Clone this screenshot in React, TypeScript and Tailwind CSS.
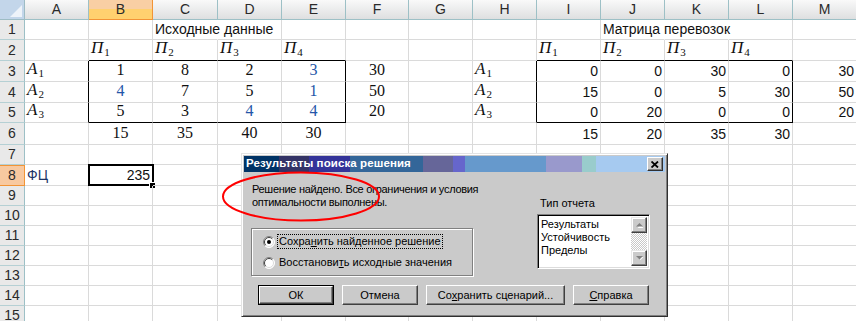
import type { ReactNode } from "react";

const COLS = ["A", "B", "C", "D", "E", "F", "G", "H", "I", "J", "K", "L", "M"];
const ROWS = [1, 2, 3, 4, 5, 6, 7, 8, 9, 10, 11, 12, 13, 14, 15];

type Cell = {
    v: ReactNode;
    font: "sans" | "serif";
    align: "left" | "center" | "right";
    color?: string;
};

// italic label with a subscript digit, as in the sheet
function Label({ ch, n }: { ch: string; n: number }) {
    return (
        <span className="italic text-[17px] leading-[18px]">
            {ch}
            <span className="not-italic text-[11px] relative top-[3px] ml-[1px]">{n}</span>
        </span>
    );
}

const cells: Record<string, Cell> = {
    C1: { v: "Исходные данные", font: "sans", align: "left" },
    J1: { v: "Матрица перевозок", font: "sans", align: "left" },
    A8: { v: "ФЦ", font: "sans", align: "left", color: "text-[#1c3366]" },
    B8: { v: "235", font: "sans", align: "right" },
};

["B", "C", "D", "E"].forEach((c, i) => {
    cells[c + "2"] = { v: <Label ch="П" n={i + 1} />, font: "serif", align: "left" };
});
["I", "J", "K", "L"].forEach((c, i) => {
    cells[c + "2"] = { v: <Label ch="П" n={i + 1} />, font: "serif", align: "left" };
});
[3, 4, 5].forEach((r, i) => {
    cells["A" + r] = { v: <Label ch="A" n={i + 1} />, font: "serif", align: "left" };
    cells["H" + r] = { v: <Label ch="A" n={i + 1} />, font: "serif", align: "left" };
});

const costs = [
    [1, 8, 2, 3],
    [4, 7, 5, 1],
    [5, 3, 4, 4],
];
const blue = ["B4", "E3", "E4", "E5", "D5"];
const plan = [
    [0, 0, 30, 0],
    [15, 0, 5, 30],
    [0, 20, 0, 0],
];
const supply = [30, 50, 20];

costs.forEach((row, i) => {
    row.forEach((v, j) => {
        const key = ["B", "C", "D", "E"][j] + (i + 3);
        cells[key] = {
            v,
            font: "serif",
            align: "center",
            color: blue.includes(key) ? "text-[#2456a8]" : undefined,
        };
    });
    cells["F" + (i + 3)] = { v: supply[i], font: "serif", align: "center" };
    cells["M" + (i + 3)] = { v: supply[i], font: "sans", align: "right" };
});
plan.forEach((row, i) => {
    row.forEach((v, j) => {
        cells[["I", "J", "K", "L"][j] + (i + 3)] = { v, font: "sans", align: "right" };
    });
});
[15, 35, 40, 30].forEach((v, j) => {
    cells[["B", "C", "D", "E"][j] + "6"] = { v, font: "serif", align: "center" };
});
[15, 20, 35, 30].forEach((v, j) => {
    cells[["I", "J", "K", "L"][j] + "6"] = { v, font: "sans", align: "right" };
});

function SheetCell({ col, row }: { col: string; row: number }) {
    const key = col + row;
    const cell = cells[key];
    const inner = row >= 3 && row <= 5;
    const blackRight = inner && ["A", "E", "H", "L"].includes(col);
    const blackBottom = (row === 2 || row === 5) && ["B", "C", "D", "E", "I", "J", "K", "L"].includes(col);
    const hideRight = key === "C1" || key === "J1" || key === "K1";

    const right = blackRight ? "border-r-black" : hideRight ? "border-r-transparent" : "border-r-[#dadada]";
    const bottom = blackBottom ? "border-b-black" : "border-b-[#dadada]";
    const justify =
        cell?.align === "center" ? "justify-center" : cell?.align === "right" ? "justify-end" : "justify-start";
    const font =
        cell?.font === "serif"
            ? "font-['Liberation_Serif',serif] text-[16px] leading-[18px] pb-[2px]"
            : "font-['Liberation_Sans',sans-serif] text-[14px] leading-[16px] pb-[2px]";

    return (
        <div
            className={`relative flex items-end whitespace-nowrap border-r border-b px-[2px] ${right} ${bottom} ${justify} ${font} ${cell?.color ?? "text-[#111]"}`}
        >
            {cell?.v}
            {key === "B8" && (
                <>
                    <div className="absolute -left-[1px] -top-[1px] -right-[2px] -bottom-[1px] border-2 border-black" />
                    <div className="absolute -right-[4px] -bottom-[4px] w-[7px] h-[7px] bg-black border border-white" />
                </>
            )}
        </div>
    );
}

function Radio({ checked }: { checked: boolean }) {
    return (
        <svg width="12" height="12" viewBox="0 0 12 12" className="shrink-0">
            <circle cx="6" cy="6" r="5.5" fill="#fff" />
            <path d="M2.1 9.9 A5.5 5.5 0 0 1 9.9 2.1" stroke="#808080" fill="none" />
            <path d="M9.9 2.1 A5.5 5.5 0 0 1 2.1 9.9" stroke="#fff" fill="none" />
            <path d="M2.8 9.2 A4.5 4.5 0 0 1 9.2 2.8" stroke="#404040" fill="none" />
            <path d="M9.2 2.8 A4.5 4.5 0 0 1 2.8 9.2" stroke="#dcdcdc" fill="none" />
            {checked && <circle cx="6" cy="6" r="2" fill="#000" />}
        </svg>
    );
}

function Btn({ children, w, isDefault }: { children: ReactNode; w: string; isDefault?: boolean }) {
    return (
        <div className={`${w} h-[20px] ${isDefault ? "border border-black" : ""}`}>
            <div className="h-full w-full flex items-center justify-center bg-[#cacaca] border border-t-white border-l-white border-r-[#404040] border-b-[#404040] shadow-[inset_-1px_-1px_0_#808080]">
                {children}
            </div>
        </div>
    );
}

function ScrollBtn({ up }: { up: boolean }) {
    return (
        <div className="h-[16px] flex items-center justify-center bg-[#cacaca] border border-t-[#e8e8e8] border-l-[#e8e8e8] border-r-[#404040] border-b-[#404040] shadow-[inset_-1px_-1px_0_#808080,inset_1px_1px_0_#fff]">
            <svg width="9" height="6" viewBox="0 0 9 6">
                {up ? (
                    <>
                        <path d="M1.5 5 L4.5 2 L7.5 5 Z" fill="#fff" transform="translate(1 1)" />
                        <path d="M1 4.5 L4.5 1 L8 4.5 Z" fill="#808080" />
                    </>
                ) : (
                    <>
                        <path d="M1.5 1 L4.5 4 L7.5 1 Z" fill="#fff" transform="translate(1 1)" />
                        <path d="M1 1 L4.5 4.5 L8 1 Z" fill="#808080" />
                    </>
                )}
            </svg>
        </div>
    );
}

function SolverDialog() {
    return (
        <div className="absolute left-[241px] top-[153px] w-[427px] h-[164px] bg-[#cacaca] border border-t-[#e4e4e4] border-l-[#e4e4e4] border-r-[#303030] border-b-[#303030] shadow-[inset_1px_1px_0_#fff,inset_-1px_-1px_0_#808080] p-[2px] font-['Liberation_Sans',sans-serif] text-[11px] text-black">
            {/* title bar */}
            <div className="h-[16px] flex items-center justify-between pl-[2px] pr-[2px] bg-[linear-gradient(to_right,#003366_0px,#003366_35px,#333366_35px,#333366_65px,#333399_65px,#333399_106px,#336699_106px,#336699_179px,#666699_179px,#666699_209px,#6666cc_209px,#6666cc_221px,#6699cc_221px,#6699cc_302px,#9999cc_302px,#9999cc_338px,#99cccc_338px,#99cccc_352px,#a6caf0_352px)]">
                <span className="text-white font-bold text-[11.5px] tracking-[0.1px]">Результаты поиска решения</span>
                <div className="w-[16px] h-[14px] flex items-center justify-center bg-[#cacaca] border border-t-white border-l-white border-r-[#303030] border-b-[#303030] shadow-[inset_-1px_-1px_0_#808080]">
                    <svg width="8" height="7" viewBox="0 0 8 7">
                        <path d="M0.5 0.5 L7 6.5 M7 0.5 L0.5 6.5" stroke="#000" strokeWidth="1.8" />
                    </svg>
                </div>
            </div>

            <div className="flex pl-[7px]">
                <div className="w-[222px] flex flex-col">
                    <p className="mt-[11px] pl-[1px] leading-[13px] whitespace-nowrap tracking-[-0.3px]">
                        Решение найдено. Все ограничения и условия
                        <br />
                        оптимальности выполнены.
                    </p>
                    <div className="mt-[19px] h-[48px] border border-[#808080] shadow-[inset_1px_1px_0_#fff,1px_1px_0_#fff] pl-[11px] pt-[5px] flex flex-col gap-[6px]">
                        <div className="flex items-center h-[15px] gap-[2px]">
                            <Radio checked />
                            <span className="border border-dotted border-black px-[1px] h-[15px] flex items-center">
                                Сохра<u>н</u>ить найденное решение
                            </span>
                        </div>
                        <div className="flex items-center h-[15px] gap-[3px]">
                            <Radio checked={false} />
                            <span className="px-[1px]">
                                Восстанови<u>т</u>ь исходные значения
                            </span>
                        </div>
                    </div>
                </div>
                <div className="ml-[64px] w-[113px] flex flex-col">
                    <div className="mt-[25px] pl-[3px] leading-[13px]">Тип отчета</div>
                    <div className="mt-[4px] h-[55px] flex bg-white border border-t-[#808080] border-l-[#808080] border-r-white border-b-white shadow-[inset_1px_1px_0_#000,inset_-1px_-1px_0_#dcdcdc] p-[2px]">
                        <div className="flex-1 leading-[13px] pl-[1px] pt-[1px]">
                            <div>Результаты</div>
                            <div>Устойчивость</div>
                            <div>Пределы</div>
                        </div>
                        <div className="w-[16px] flex flex-col">
                            <ScrollBtn up />
                            <div className="flex-1 bg-[repeating-conic-gradient(#c8c8c8_0%_25%,#ffffff_0%_50%)] bg-[length:2px_2px]" />
                            <ScrollBtn up={false} />
                        </div>
                    </div>
                </div>
            </div>

            <div className="flex gap-[8px] pl-[14px] mt-[9px]">
                <Btn w="w-[76px]" isDefault>
                    ОК
                </Btn>
                <Btn w="w-[76px]">Отмена</Btn>
                <Btn w="w-[139px]">
                    Со<u>х</u>ранить сценарий...
                </Btn>
                <Btn w="w-[76px]">
                    <u>С</u>правка
                </Btn>
            </div>
        </div>
    );
}

export default function App() {
    return (
        <div className="relative w-[856px] h-[321px] overflow-hidden bg-white">
            <div className="grid grid-cols-[25px_64px_64px_65px_64px_64px_63px_64px_64px_64px_64px_64px_64px_64px] grid-rows-[20px_20px_21px_21px_21px_20px_22px_20px_21px_20px_20px_20px_20px_20px_20px_20px] w-[882px]">
                {/* corner */}
                <div className="relative bg-[#c3d6ea] border-r border-b border-[#9dbcc4]">
                    <svg className="absolute right-[2px] bottom-[2px]" width="12" height="12" viewBox="0 0 12 12">
                        <path d="M12 0 L12 12 L0 12 Z" fill="#eef3f9" />
                    </svg>
                </div>
                {COLS.map((c) => (
                    <div
                        key={c}
                        className={`flex items-center justify-center font-['Liberation_Sans',sans-serif] text-[14px] text-[#2a2a2a] border-b border-r ${c === "B"
                            ? "bg-[linear-gradient(#f9cfa4_0%,#f9cfa4_50%,#ffd16f_50%,#ffd16f_100%)] border-[#f29436]"
                            : "bg-[linear-gradient(#f9f9f9,#dedfe0)] border-[#9dc0c6]"
                            }`}
                    >
                        {c}
                    </div>
                ))}
                {ROWS.map((r) => (
                    <div key={r} className="contents">
                        <div
                            className={`flex items-center justify-center font-['Liberation_Sans',sans-serif] text-[14px] text-[#2a2a2a] border-r border-b ${r === 8
                                ? "bg-[#f8c9a0] border-b-[#f29436] border-r-[#f29436] border-t border-t-[#f29436]"
                                : "bg-[#e9e9e9] border-r-[#9dc0c6] border-b-[#b5d0d4]"
                                }`}
                        >
                            {r}
                        </div>
                        {COLS.map((c) => (
                            <SheetCell key={c} col={c} row={r} />
                        ))}
                    </div>
                ))}
            </div>

            <SolverDialog />

            {/* hand-drawn red ellipse over the message */}
            <svg className="absolute left-[220px] top-[170px]" width="164" height="54" viewBox="0 0 164 54">
                <ellipse cx="81" cy="26.5" rx="78" ry="24" fill="none" stroke="#ff0000" strokeWidth="2" />
            </svg>
        </div>
    );
}
